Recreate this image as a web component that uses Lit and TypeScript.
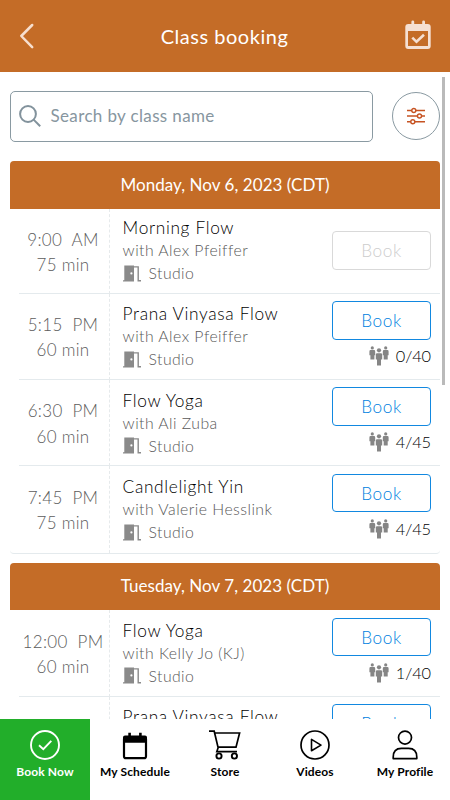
import { LitElement, html, css, svg, nothing } from "lit";
import { customElement, property } from "lit/decorators.js";
import { classMap } from "lit/directives/class-map.js";

interface Lesson {
  time: string;
  half: string;
  length: string;
  name: string;
  teacher: string;
  spots?: string;
}

interface Day {
  label: string;
  lessons: Lesson[];
}

const days: Day[] = [
  {
    label: "Monday, Nov 6, 2023 (CDT)",
    lessons: [
      { time: "9:00", half: "AM", length: "75 min", name: "Morning Flow", teacher: "Alex Pfeiffer" },
      { time: "5:15", half: "PM", length: "60 min", name: "Prana Vinyasa Flow", teacher: "Alex Pfeiffer", spots: "0/40" },
      { time: "6:30", half: "PM", length: "60 min", name: "Flow Yoga", teacher: "Ali Zuba", spots: "4/45" },
      { time: "7:45", half: "PM", length: "75 min", name: "Candlelight Yin", teacher: "Valerie Hesslink", spots: "4/45" },
    ],
  },
  {
    label: "Tuesday, Nov 7, 2023 (CDT)",
    lessons: [
      { time: "12:00", half: "PM", length: "60 min", name: "Flow Yoga", teacher: "Kelly Jo (KJ)", spots: "1/40" },
      { time: "5:15", half: "PM", length: "60 min", name: "Prana Vinyasa Flow", teacher: "Alex Pfeiffer", spots: "0/40" },
    ],
  },
];

const door = html`<svg class="door" width="18" height="17" viewBox="0 0 18 17">
  <path fill="#8a8a8a" d="M1.3 .5H11V16.5H0V15.2H1.3z" />
  <path fill="none" stroke="#8a8a8a" stroke-width="1.4" d="M11 1.9H15.2V15.8H18" />
  <circle cx="8.4" cy="8.4" r="1.1" fill="#fff" />
</svg>`;

const people = html`<svg class="people" width="20" height="20" viewBox="0 0 20 20" fill="#858585">
  <circle cx="3.3" cy="1.9" r="1.6" />
  <path d="M1.6 4.1H5Q6.2 4.1 6.2 5.4V9.3H5.4V13.5H1.4V9.3H.4V5.4Q.4 4.1 1.6 4.1z" />
  <circle cx="16.7" cy="1.9" r="1.6" />
  <path d="M15 4.1H18.4Q19.6 4.1 19.6 5.4V9.3H18.7V13.5H14.7V9.3H13.8V5.4Q13.8 4.1 15 4.1z" />
  <circle cx="10" cy="4.3" r="2.1" />
  <path d="M8.2 7.2H11.8Q13.2 7.2 13.2 8.6V13.5H12V19.6H8V13.5H6.8V8.6Q6.8 7.2 8.2 7.2z" />
</svg>`;

@customElement("lesson-row")
class LessonRow extends LitElement {
  @property({ attribute: false }) lesson!: Lesson;

  static styles = css`
    :host { display: block; font-weight: 300; }
    .row { display: flex; height: 86.4px; box-sizing: border-box; }
    .row.plain { height: 85px; }
    .when {
      width: 100px; box-sizing: border-box; padding: 18.4px 0 0 7px;
      border-right: 1px dashed #e6eaec; text-align: center;
      font-size: 17px; line-height: 25.6px; color: #5c5c5c; letter-spacing: .32px;
      white-space: pre;
    }
    .what { flex: 1; padding: 8.8px 0 0 12.6px; color: #585858; white-space: nowrap; }
    .plain .what { padding-top: 7.6px; }
    .name { font-size: 17.3px; line-height: 24px; color: #000; letter-spacing: .66px; }
    .teacher { font-size: 15.8px; line-height: 20px; letter-spacing: .46px; }
    .place { display: flex; align-items: center; gap: 8px; font-size: 15.8px; line-height: 26px; letter-spacing: .4px; }
    .door { flex: none; }
    .side { width: 99px; margin-right: 9px; padding-top: 7.6px; }
    .plain .side { padding-top: 22.8px; }
    .book {
      display: flex; align-items: center; justify-content: center;
      width: 99px; height: 38.5px; box-sizing: border-box;
      border: 1px solid #1288e0; border-radius: 4px;
      font-size: 17.3px; color: #007fe0; letter-spacing: .6px;
    }
    .plain .book { border-color: #d9d9d9; color: #cdcdcd; }
    .spots { display: flex; align-items: center; justify-content: flex-end; gap: 7px; height: 32px; font-size: 16.4px; color: #000; }
    .spots span { letter-spacing: -.1px; }
    .people { margin-top: 1px; }
  `;

  render() {
    const l = this.lesson;
    return html`<div class=${classMap({ row: true, plain: !l.spots })}>
      <div class="when">${l.time}  ${l.half}<br />${l.length}</div>
      <div class="what">
        <div class="name">${l.name}</div>
        <div class="teacher">with ${l.teacher}</div>
        <div class="place">${door}<span>Studio</span></div>
      </div>
      <div class="side">
        <div class="book">Book</div>
        ${l.spots ? html`<div class="spots">${people}<span>${l.spots}</span></div>` : nothing}
      </div>
    </div>`;
  }
}

const tabs = [
  {
    label: "Book Now",
    active: true,
    icon: svg`<circle cx="18" cy="18" r="14" /><path d="M12 18.3 16.3 22.2 24.3 13.8" />`,
  },
  {
    label: "My Schedule",
    icon: svg`<rect x="7" y="10.2" width="22" height="21" rx="2" stroke-width="2.2" />
      <path fill="#000" stroke="none" d="M6 15.8V10.8Q6 8.6 8 8.6H28Q30 8.6 30 10.8V15.8z" />
      <path stroke-width="2.6" d="M12.6 5.8V10M23.4 5.8V10" />`,
  },
  {
    label: "Store",
    icon: svg`<path stroke-width="1.7" d="M2 4.2H7.2L11 20.2H29L32.6 6H8M11.3 20.2 9.8 24.6H30" />
      <circle cx="12" cy="29" r="2.6" /><circle cx="27.4" cy="29" r="2.6" />`,
  },
  {
    label: "Videos",
    icon: svg`<circle cx="18" cy="18" r="14" stroke-width="1.7" /><path stroke-width="1.6" stroke-linejoin="round" d="M14.5 12.4V23.8L24 18.1z" />`,
  },
  {
    label: "My Profile",
    icon: svg`<circle cx="18" cy="10.6" r="6.5" stroke-width="1.7" />
      <path stroke-width="1.7" stroke-linejoin="round" d="M6.2 31.6V30.2Q6.2 21.4 14.4 21.4H21.6Q29.8 21.4 29.8 30.2V31.6z" />`,
  },
];

@customElement("app-root")
class AppRoot extends LitElement {
  static styles = css`
    :host {
      display: flex; flex-direction: column; height: 800px; width: 450px; overflow: hidden;
      background: #fff; font-family: Lato, "Noto Sans", sans-serif; font-weight: 400;
    }
    .top {
      flex: none; display: flex; align-items: center; justify-content: space-between;
      height: 72px; box-sizing: border-box; padding: 0 17px 0 18px;
      background: #c46c27; color: #fff;
    }
    .title { font-size: 20px; letter-spacing: .52px; padding-bottom: 1px; }
    .list { flex: 1; min-height: 0; overflow: hidden; position: relative; padding: 19px 10px 0; }
    .thumb { position: absolute; left: 442px; top: 5px; width: 3px; height: 308px; background: #bababa; }
    .find { display: flex; align-items: center; justify-content: space-between; height: 50.5px; margin-bottom: 19.5px; }
    .box {
      display: flex; align-items: center; gap: 9.5px; width: 363px; height: 50.5px; box-sizing: border-box;
      padding-left: 8px; border: 1px solid #8a9aa2; border-radius: 5px;
      color: #8796a0; font-size: 17px; letter-spacing: .36px;
    }
    .box span { padding-bottom: 2px; }
    .filter {
      display: flex; align-items: center; justify-content: center;
      width: 48px; height: 48px; box-sizing: border-box; border: 1px solid #8a9aa2; border-radius: 50%;
    }
    .day { margin-bottom: 9px; border-bottom: 1px solid #e4eaed; border-radius: 4px; }
    .date {
      display: flex; align-items: center; justify-content: center; height: 47.5px; box-sizing: border-box; padding-bottom: 1px;
      background: #c46c27; color: #fff; border-radius: 4px 4px 0 0; font-size: 17px; letter-spacing: .05px;
    }
    .rule { height: 1px; margin: -1px 0 0 9px; background: #e4eaed; }
    .tabs { flex: none; display: flex; height: 81px; background: #fff; }
    .tab {
      width: 90px; box-sizing: border-box; padding-top: 7.5px; display: flex; flex-direction: column; align-items: center;
      font-size: 12px; font-weight: 700; line-height: 18px; letter-spacing: .12px; color: #000;
    }
    .active { background: #22ae2a; color: #fff; }
    .tab svg { fill: none; stroke: currentColor; stroke-width: 1.9; }
  `;

  render() {
    return html`
      <div class="top">
        <svg width="28" height="28" viewBox="0 0 28 28"><path d="M14.2 3 3.3 14 14.2 25.2" fill="none" stroke="#f7dfcf" stroke-width="2.5" stroke-linecap="round" stroke-linejoin="round" /></svg>
        <div class="title">Class booking</div>
        <svg width="30" height="32" viewBox="0 0 30 32">
          <path d="M5.5 4H24.7Q27.7 4 27.7 7V26Q27.7 29 24.7 29H5.2Q2.3 29 2.3 26V7Q2.3 4 5.3 4z" fill="#f5e0d3" />
          <path d="M5 11H25V26H5z" fill="#c46c27" />
          <path d="M9.8 1.8V6M20.6 1.8V6" stroke="#f5e0d3" stroke-width="2.8" stroke-linecap="round" />
          <path d="M9.3 17.6 13.5 21.8 21 14.8" fill="none" stroke="#f5e0d3" stroke-width="2.6" />
        </svg>
      </div>
      <div class="list">
        <div class="find">
          <div class="box">
            <svg width="22" height="22" viewBox="0 0 22 22" fill="none" stroke="#82929c" stroke-width="2"><circle cx="9" cy="9" r="7.9" /><path d="M14.6 14.6 21.2 21.2" /></svg>
            <span>Search by class name</span>
          </div>
          <div class="filter">
            <svg width="18" height="18" viewBox="0 0 18 18" fill="#fff" stroke="#c65322" stroke-width="1.4">
              <path d="M0 3.5H18M0 9H18M0 14.7H18" />
              <circle cx="6.8" cy="3.5" r="2" /><circle cx="12.5" cy="9" r="2" /><circle cx="5.8" cy="14.7" r="2" />
            </svg>
          </div>
        </div>
        ${days.map(
          (d) => html`<div class="day">
            <div class="date">${d.label}</div>
            ${d.lessons.map((l, i) => html`${i ? html`<div class="rule"></div>` : nothing}<lesson-row .lesson=${l}></lesson-row>`)}
          </div>`
        )}
        <div class="thumb"></div>
      </div>
      <div class="tabs">
        ${tabs.map(
          (t) => html`<div class=${classMap({ tab: true, active: !!t.active })}>
            <svg width="36" height="36" viewBox="0 0 36 36">${t.icon}</svg>
            <span>${t.label}</span>
          </div>`
        )}
      </div>
    `;
  }
}
